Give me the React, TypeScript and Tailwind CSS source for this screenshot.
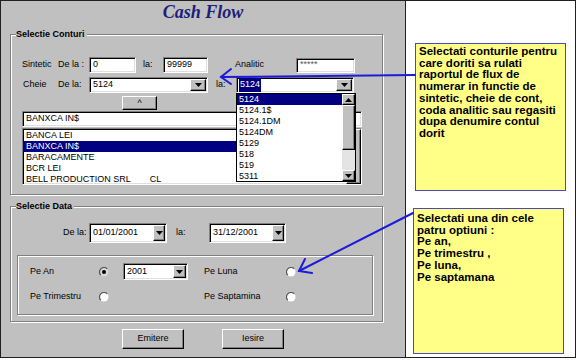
import React from 'react'

// Classic Win9x bevels
const sunken =
  'border border-t-[#808080] border-l-[#808080] border-r-white border-b-white shadow-[inset_1px_1px_0_#000,inset_-1px_-1px_0_#dfdfdf] bg-white'
const raised =
  'border border-t-white border-l-white border-r-black border-b-black shadow-[inset_-1px_-1px_0_#808080] bg-[#c0c0c0]'
const etched = 'border border-[#808080] shadow-[inset_1px_1px_0_#fff,1px_1px_0_#fff]'

function Tri({ up = false }: { up?: boolean }) {
  return (
    <svg width="7" height="4" viewBox="0 0 7 4">
      <polygon points={up ? '3.5,0 7,4 0,4' : '0,0 7,0 3.5,4'} fill="#000" />
    </svg>
  )
}

function Field({ className, text, muted = false }: { className: string; text: string; muted?: boolean }) {
  return (
    <div className={`flex items-center pl-[3px] ${sunken} ${className} ${muted ? 'text-[#555]' : ''}`}>
      {text}
    </div>
  )
}

function Combo({
  className,
  btn,
  text,
  selected = false,
  children,
}: {
  className: string
  btn: string
  text: string
  selected?: boolean
  children?: React.ReactNode
}) {
  return (
    <div className={`relative flex ${sunken} ${className}`}>
      <div className="flex flex-1 items-center pl-[2px]">
        <span className={selected ? 'bg-[#000080] px-[1px] text-white' : 'px-[1px]'}>{text}</span>
      </div>
      <div className={`my-[1px] mr-[1px] flex items-center justify-center ${raised} ${btn}`}>
        <Tri />
      </div>
      {children}
    </div>
  )
}

function Radio({ checked = false }: { checked?: boolean }) {
  return (
    <svg width="10" height="10" viewBox="0 0 10 10" className="shrink-0">
      <circle cx="5" cy="5" r="4.5" fill={checked ? '#d8d8d8' : '#fff'} />
      <path d="M8.2 1.8 A4.5 4.5 0 0 0 1.8 8.2" stroke="#555" strokeWidth="1.2" fill="none" />
      {checked && <circle cx="5" cy="5" r="2" fill="#000" />}
    </svg>
  )
}

const accounts = ['5124', '5124.1$', '5124.1DM', '5124DM', '5129', '518', '519', '5311']

function DropList() {
  return (
    <div className="absolute left-[-1px] top-[15px] z-10 flex h-[89px] w-[120px] border border-black bg-white">
      <div className="flex-1">
        {accounts.map((a, i) => (
          <div
            key={a}
            className={`h-[11px] pl-[2px] leading-[11px] ${i === 0 ? 'bg-[#000080] text-white' : ''}`}
          >
            {a}
          </div>
        ))}
      </div>
      <div className="flex w-[13px] flex-col">
        <div className={`flex h-[11px] items-center justify-center ${raised}`}>
          <Tri up />
        </div>
        <div className={`h-[45px] ${raised}`} />
        <div className="flex-1 bg-[#e4e4e4]" />
        <div className={`flex h-[11px] items-center justify-center ${raised}`}>
          <Tri />
        </div>
      </div>
    </div>
  )
}

const names = ['BANCA LEI', 'BANXCA IN$', 'BARACAMENTE', 'BCR LEI']

export default function App() {
  return (
    <div className="relative flex h-[360px] w-[576px] bg-white font-['Liberation_Sans',Arial,sans-serif] text-[9px] text-black">
      {/* ── Dialog ─────────────────────────────────────────── */}
      <div className="flex h-[358px] w-[406px] flex-col border border-[#202020] bg-[#c0c0c0]">
        <div className="h-[22px] text-center font-['Liberation_Serif',serif] text-[18px] font-bold italic leading-[22px] text-[#1e1e7a]">
          Cash Flow
        </div>

        <fieldset className={`ml-[9px] mt-[6px] w-[373px] pb-[9px] pl-[5px] pr-0 pt-[17px] ${etched}`}>
          <legend className="bg-[#c0c0c0] pr-[2px] text-[9px] font-bold leading-[11px]">Selectie Conturi</legend>
          <div className="ml-[6px] flex flex-col items-start">
            <div className="flex h-[16px] items-center">
              <span className="w-[36px]">Sintetic</span>
              <span className="w-[31px]">De la :</span>
              <Field className="h-[16px] w-[47px]" text="0" />
              <span className="ml-[7px] w-[20px]">la:</span>
              <Field className="h-[16px] w-[45px]" text="99999" />
              <span className="ml-[27px] w-[61px]">Analitic</span>
              <Field className="h-[15px] w-[59px]" text="*****" muted />
            </div>
            <div className="mt-[4px] flex h-[16px] items-center">
              <span className="ml-[1px] w-[35px]">Cheie</span>
              <span className="w-[31px]">De la:</span>
              <Combo className="h-[16px] w-[119px]" btn="w-[16px]" text="5124" />
              <span className="ml-[8px] w-[20px]">la:</span>
              <Combo className="h-[16px] w-[118px]" btn="w-[16px]" text="5124" selected>
                <DropList />
              </Combo>
            </div>
            <button className={`ml-[100px] mt-[3px] flex h-[14px] w-[35px] items-start justify-center leading-[12px] ${raised}`}>
              ^
            </button>
            <Field className="mt-[1px] h-[16px] w-[340px]" text="BANXCA IN$" />
            <div className={`mt-[1px] flex h-[57px] w-[340px] ${sunken}`}>
              <div className="flex-1 pt-[1px]">
                {names.map(n => (
                  <div
                    key={n}
                    className={`h-[11px] pl-[3px] leading-[11px] ${n === 'BANXCA IN$' ? 'bg-[#000080] text-white' : ''}`}
                  >
                    {n}
                  </div>
                ))}
                <div className="h-[11px] pl-[3px] leading-[11px]">
                  BELL PRODUCTION SRL<span className="ml-[19px]">CL</span>
                </div>
              </div>
              <div className={`w-[15px] ${raised}`} />
            </div>
          </div>
        </fieldset>

        <fieldset className={`ml-[9px] mt-[6px] w-[373px] pb-[6px] pl-[5px] pr-0 pt-[11px] ${etched}`}>
          <legend className="bg-[#c0c0c0] pr-[2px] text-[9px] font-bold leading-[11px]">Selectie Data</legend>
          <div className="flex h-[20px] items-center">
            <span className="ml-[47px] w-[26px]">De la:</span>
            <Combo className="h-[20px] w-[78px]" btn="w-[12px]" text="01/01/2001" />
            <span className="ml-[9px] w-[33px]">la:</span>
            <Combo className="h-[20px] w-[77px]" btn="w-[12px]" text="31/12/2001" />
          </div>
          <div className={`ml-[1px] mt-[12px] h-[60px] w-[356px] pt-[7px] ${etched}`}>
            <div className="flex h-[17px] items-center">
              <span className="ml-[12px] w-[69px]">Pe An</span>
              <Radio checked />
              <Combo className="ml-[14px] h-[17px] w-[65px]" btn="w-[13px]" text="2001" />
              <span className="ml-[16px] w-[82px]">Pe Luna</span>
              <Radio />
            </div>
            <div className="mt-[8px] flex h-[17px] items-center">
              <span className="ml-[12px] w-[69px]">Pe Trimestru</span>
              <Radio />
              <span className="ml-[95px] w-[82px]">Pe Saptamina</span>
              <Radio />
            </div>
          </div>
        </fieldset>

        <div className="mt-[7px] flex">
          <button className={`ml-[121px] h-[20px] w-[62px] ${raised}`}>Emitere</button>
          <button className={`ml-[38px] h-[20px] w-[62px] ${raised}`}>Iesire</button>
        </div>
      </div>

      {/* ── Help notes ─────────────────────────────────────── */}
      <div className="flex h-[358px] w-[170px] flex-col border-y border-r border-[#202020] bg-white text-[11.5px] font-bold leading-[11.7px]">
        <div className="ml-[9px] mt-[42px] h-[148px] w-[151px] whitespace-nowrap border border-[#4848c8] bg-[#ffff88] pl-[3px] pt-[2px]">
          Selectati conturile pentru
          <br />care doriti sa rulati
          <br />raportul de flux de
          <br />numerar in functie de
          <br />sintetic, cheie de cont,
          <br />coda analitic sau regasiti
          <br />dupa denumire contul
          <br />dorit
        </div>
        <div className="ml-[7px] mt-[17px] h-[146px] w-[151px] whitespace-nowrap border border-[#4848c8] bg-[#ffff88] pl-[3px] pt-[4px]">
          Selectati una din cele
          <br />patru optiuni :
          <br />Pe an,
          <br />Pe trimestru ,
          <br />Pe luna,
          <br />Pe saptamana
        </div>
      </div>

      {/* ── Pointer arrows ─────────────────────────────────── */}
      <svg className="pointer-events-none absolute left-0 top-0" width="576" height="360">
        <g stroke="#1c1cd8" strokeWidth="2" fill="none" strokeLinecap="round">
          <path d="M415 75 L221 77" />
          <path d="M231 69 L221 77 L231 84" />
          <path d="M413 213 L299 271" />
          <path d="M305 259 L299 271 L312 273" />
        </g>
      </svg>
    </div>
  )
}
